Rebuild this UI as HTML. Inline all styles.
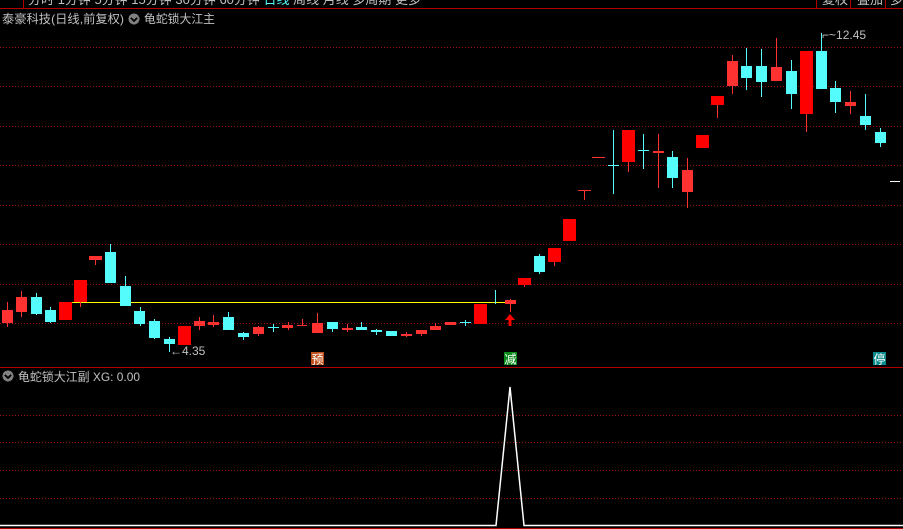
<!DOCTYPE html>
<html><head><meta charset="utf-8"><style>
html,body{margin:0;padding:0;background:#000;width:903px;height:529px;overflow:hidden}
svg{display:block}
text{font-family:"Liberation Sans","Noto Sans CJK SC",sans-serif}
</style></head><body>
<svg width="903" height="529" viewBox="0 0 903 529" xmlns="http://www.w3.org/2000/svg" shape-rendering="crispEdges">
<rect width="903" height="529" fill="#000"/>
<text x="28" y="4" font-size="13" fill="#c0c0c0">分时  1分钟  5分钟  15分钟  30分钟  60分钟  <tspan fill="#54fcfc">日线</tspan>  周线  月线  多周期  更多</text>
<text x="822" y="4" font-size="13" fill="#c0c0c0">复权</text>
<text x="857" y="4" font-size="13" fill="#c0c0c0">叠加</text>
<text x="890" y="4" font-size="13" fill="#c0c0c0">多</text>
<rect x="0" y="8" width="903" height="1" fill="#b00000"/>
<rect x="23" y="0" width="1" height="8" fill="#b00000"/>
<rect x="816" y="0" width="1" height="8" fill="#b00000"/>
<rect x="850" y="0" width="1" height="8" fill="#b00000"/>
<rect x="885" y="0" width="1" height="8" fill="#b00000"/>
<text x="2" y="23" font-size="12" fill="#c0c0c0" textLength="122" lengthAdjust="spacingAndGlyphs">泰豪科技(日线,前复权)</text>
<circle cx="134" cy="19" r="5.5" fill="#808080"/>
<path d="M131 18 L134 21 L137 18" stroke="#000" stroke-width="1.5" fill="none"/>
<text x="144" y="23" font-size="12" fill="#c0c0c0" textLength="71" lengthAdjust="spacingAndGlyphs">龟蛇锁大江主</text>
<g stroke="#a01010" stroke-width="1" stroke-dasharray="1,2">
<line x1="0" y1="47.5" x2="903" y2="47.5"/><line x1="0" y1="86.5" x2="903" y2="86.5"/>
<line x1="0" y1="126.5" x2="903" y2="126.5"/><line x1="0" y1="165.5" x2="903" y2="165.5"/>
<line x1="0" y1="205.5" x2="903" y2="205.5"/><line x1="0" y1="244.5" x2="903" y2="244.5"/>
<line x1="0" y1="284.5" x2="903" y2="284.5"/><line x1="0" y1="323.5" x2="903" y2="323.5"/>
<line x1="0" y1="415.5" x2="903" y2="415.5"/><line x1="0" y1="442.5" x2="903" y2="442.5"/>
<line x1="0" y1="470.5" x2="903" y2="470.5"/><line x1="0" y1="498.5" x2="903" y2="498.5"/>
</g>
<rect x="66" y="302" width="450" height="1" fill="#ffff00"/>
<g stroke-width="1">
<g stroke="#ff3232">
<line x1="7.5" y1="302" x2="7.5" y2="327"/><line x1="21.5" y1="291" x2="21.5" y2="317"/>
<line x1="80.5" y1="302" x2="80.5" y2="307"/><line x1="95.5" y1="256" x2="95.5" y2="265"/>
<line x1="199.5" y1="317" x2="199.5" y2="330"/><line x1="213.5" y1="315" x2="213.5" y2="327"/>
<line x1="258.5" y1="326" x2="258.5" y2="336"/><line x1="288.5" y1="322" x2="288.5" y2="330"/>
<line x1="302.5" y1="319" x2="302.5" y2="326"/><line x1="317.5" y1="313" x2="317.5" y2="333"/>
<line x1="347.5" y1="324" x2="347.5" y2="332"/><line x1="406.5" y1="332" x2="406.5" y2="337"/>
<line x1="421.5" y1="330" x2="421.5" y2="336"/><line x1="435.5" y1="323" x2="435.5" y2="330"/>
<line x1="510.5" y1="299" x2="510.5" y2="312"/><line x1="524.5" y1="285" x2="524.5" y2="287"/>
<line x1="554.5" y1="262" x2="554.5" y2="266"/><line x1="584.5" y1="190" x2="584.5" y2="200"/>
<line x1="628.5" y1="162" x2="628.5" y2="172"/><line x1="658.5" y1="134" x2="658.5" y2="188"/>
<line x1="687.5" y1="158" x2="687.5" y2="208"/><line x1="717.5" y1="105" x2="717.5" y2="118"/>
<line x1="732.5" y1="55" x2="732.5" y2="94"/><line x1="776.5" y1="38" x2="776.5" y2="81"/>
<line x1="806.5" y1="114" x2="806.5" y2="132"/><line x1="850.5" y1="91" x2="850.5" y2="114"/>
</g>
<g stroke="#54fcfc">
<line x1="36.5" y1="293" x2="36.5" y2="315"/><line x1="50.5" y1="307" x2="50.5" y2="323"/>
<line x1="110.5" y1="244" x2="110.5" y2="283"/><line x1="125.5" y1="276" x2="125.5" y2="306"/>
<line x1="140.5" y1="307" x2="140.5" y2="326"/><line x1="154.5" y1="319" x2="154.5" y2="339"/>
<line x1="169.5" y1="337" x2="169.5" y2="352"/><line x1="228.5" y1="312" x2="228.5" y2="330"/>
<line x1="243.5" y1="332" x2="243.5" y2="340"/><line x1="273.5" y1="324" x2="273.5" y2="332"/>
<line x1="332.5" y1="322" x2="332.5" y2="332"/><line x1="361.5" y1="322" x2="361.5" y2="330"/>
<line x1="376.5" y1="329" x2="376.5" y2="335"/><line x1="465.5" y1="320" x2="465.5" y2="326"/>
<line x1="495.5" y1="290" x2="495.5" y2="304"/><line x1="539.5" y1="254" x2="539.5" y2="274"/>
<line x1="613.5" y1="130" x2="613.5" y2="194"/><line x1="643.5" y1="134" x2="643.5" y2="169"/>
<line x1="672.5" y1="151" x2="672.5" y2="188"/><line x1="746.5" y1="48" x2="746.5" y2="90"/>
<line x1="761.5" y1="49" x2="761.5" y2="97"/><line x1="791.5" y1="60" x2="791.5" y2="109"/>
<line x1="821.5" y1="33" x2="821.5" y2="89"/><line x1="835.5" y1="81" x2="835.5" y2="113"/>
<line x1="865.5" y1="94" x2="865.5" y2="130"/><line x1="880.5" y1="128" x2="880.5" y2="147"/>
</g>
</g>
<g fill="#ff3232">
<rect x="2" y="310" width="11" height="13"/><rect x="16" y="297" width="11" height="15"/>
<rect x="89" y="256" width="13" height="4"/><rect x="194" y="321" width="11" height="5"/>
<rect x="208" y="322" width="11" height="3"/><rect x="253" y="327" width="11" height="7"/>
<rect x="282" y="325" width="11" height="3"/><rect x="297" y="325" width="10" height="1"/>
<rect x="312" y="323" width="11" height="10"/><rect x="342" y="328" width="11" height="2"/>
<rect x="401" y="334" width="11" height="2"/><rect x="416" y="330" width="11" height="4"/>
<rect x="430" y="326" width="11" height="4"/><rect x="445" y="322" width="11" height="3"/>
<rect x="505" y="300" width="11" height="4"/><rect x="578" y="190" width="13" height="1"/>
<rect x="592" y="157" width="13" height="1"/><rect x="653" y="151" width="11" height="2"/>
<rect x="682" y="170" width="11" height="22"/><rect x="727" y="61" width="11" height="25"/>
<rect x="771" y="67" width="11" height="14"/><rect x="845" y="102" width="11" height="4"/>
</g>
<g fill="#ff0000">
<rect x="59" y="302" width="13" height="18"/><rect x="74" y="280" width="13" height="22"/>
<rect x="178" y="326" width="13" height="19"/><rect x="474" y="304" width="13" height="20"/>
<rect x="518" y="278" width="13" height="7"/><rect x="548" y="248" width="13" height="14"/>
<rect x="563" y="219" width="13" height="22"/><rect x="622" y="130" width="13" height="32"/>
<rect x="696" y="135" width="13" height="13"/><rect x="711" y="96" width="13" height="9"/>
<rect x="800" y="51" width="13" height="63"/>
</g>
<g fill="#54fcfc">
<rect x="31" y="297" width="11" height="17"/><rect x="45" y="310" width="11" height="12"/>
<rect x="105" y="252" width="11" height="31"/><rect x="120" y="286" width="11" height="20"/>
<rect x="134" y="311" width="11" height="13"/><rect x="149" y="321" width="11" height="17"/>
<rect x="164" y="339" width="11" height="5"/><rect x="223" y="317" width="11" height="13"/>
<rect x="238" y="333" width="11" height="4"/><rect x="268" y="327" width="11" height="1"/>
<rect x="327" y="322" width="11" height="7"/><rect x="356" y="327" width="11" height="3"/>
<rect x="371" y="330" width="11" height="2"/><rect x="386" y="331" width="11" height="5"/>
<rect x="460" y="322" width="11" height="1"/><rect x="534" y="256" width="11" height="16"/>
<rect x="608" y="165" width="11" height="1"/><rect x="638" y="150" width="11" height="1"/>
<rect x="667" y="157" width="11" height="21"/><rect x="741" y="66" width="11" height="12"/>
<rect x="756" y="66" width="11" height="16"/><rect x="786" y="71" width="11" height="23"/>
<rect x="816" y="51" width="11" height="38"/><rect x="830" y="88" width="11" height="14"/>
<rect x="860" y="116" width="11" height="9"/><rect x="875" y="132" width="11" height="11"/>
</g>
<rect x="890" y="181" width="10" height="1" fill="#fff"/>
<path d="M510 314 L505 320 L508.5 320 L508.5 326 L511.5 326 L511.5 320 L515 320 Z" fill="#ff0000" shape-rendering="auto"/>
<text x="170" y="355" font-size="12" fill="#c0c0c0">←4.35</text>
<text x="822" y="39" font-size="12" fill="#c0c0c0">⌐~12.45</text>
<rect x="311" y="352" width="13" height="13" fill="#c0501a"/><text x="311.5" y="363.5" font-size="12" fill="#fff">预</text>
<rect x="504" y="352" width="13" height="13" fill="#0a8a1a"/><text x="504.5" y="363.5" font-size="12" fill="#fff">减</text>
<rect x="873" y="352" width="13" height="13" fill="#0a8a8a"/><text x="873.5" y="363.5" font-size="12" fill="#fff">停</text>
<rect x="0" y="367" width="903" height="1" fill="#b00000"/>
<circle cx="8" cy="376" r="5.5" fill="#808080"/>
<path d="M5 375 L8 378 L11 375" stroke="#000" stroke-width="1.5" fill="none"/>
<text x="18" y="381" font-size="12" fill="#c0c0c0" textLength="122" lengthAdjust="spacingAndGlyphs">龟蛇锁大江副  XG: 0.00</text>
<path d="M0 525.5 L496 525.5 L510 387 L524 525.5 L903 525.5" stroke="#fff" stroke-width="1.5" fill="none" shape-rendering="auto"/>
<rect x="0" y="528" width="903" height="1" fill="#b00000"/>
</svg>
</body></html>
